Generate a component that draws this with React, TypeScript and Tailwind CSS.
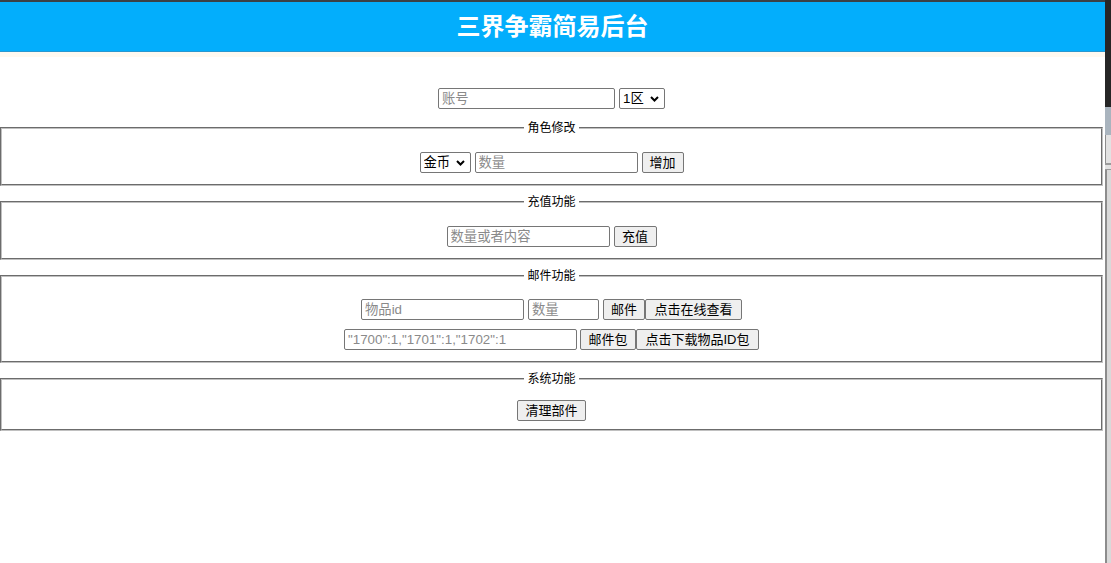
import React from "react";

function TextInput({ placeholder, w }: { placeholder: string; w: string }) {
  return (
    <input
      type="text"
      placeholder={placeholder}
      className={`${w} h-[21px] shrink-0 rounded-[2px] border border-[#767676] bg-white px-[3px] text-[13.33px] leading-[19px] text-black outline-none placeholder:text-[#8a8a8a]`}
    />
  );
}

function Select({ label, w }: { label: string; w: string }) {
  return (
    <span className={`relative inline-flex ${w} h-[21px] shrink-0`}>
      <select className="h-full w-full appearance-none rounded-[2px] border border-[#767676] bg-white pl-[3px] text-[13.33px] leading-[19px] text-black outline-none">
        <option>{label}</option>
      </select>
      <svg
        className="pointer-events-none absolute right-[6px] top-[8px]"
        width="9"
        height="6"
        viewBox="0 0 9 6"
      >
        <path d="M1 1l3.5 3.5L8 1" fill="none" stroke="#000" strokeWidth="2" />
      </svg>
    </span>
  );
}

function Btn({ label, w }: { label: string; w: string }) {
  return (
    <button
      type="button"
      className={`${w} h-[21px] shrink-0 rounded-[2px] border border-[#767676] bg-[#efefef] text-center text-[13px] leading-[19px] text-black`}
    >
      {label}
    </button>
  );
}

export default function App() {
  return (
    <div className="flex h-[563px] w-[1111px] overflow-hidden bg-white font-['Liberation_Sans','Noto_Sans_CJK_SC',sans-serif] text-black">
      <main className="flex w-[1105px] flex-col">
        <div className="h-[2px] bg-[#3b4046]" />
        <header className="flex h-[50px] items-center justify-center border-b border-[#2a98cf] bg-[#03aefc]">
          <h1 className="text-[24px] font-bold leading-none text-white">三界争霸简易后台</h1>
        </header>
        <div className="h-[5px] bg-[#fff9f0]" />

        <div className="mt-[31px] flex h-[21px] items-center justify-center gap-[4px] pr-[2px]">
          <TextInput placeholder="账号" w="w-[177px]" />
          <Select label="1区" w="w-[46px]" />
        </div>

        <fieldset className="mr-[2px] mt-[11px] border-2 border-[#c0c0c0] px-3 pb-[11px] pt-4 [border-style:groove]">
          <legend className="mx-auto px-[3px] text-[12px] leading-4">角色修改</legend>
          <div className="flex h-[21px] items-center justify-center gap-[4px]">
            <Select label="金币" w="w-[51px]" />
            <TextInput placeholder="数量" w="w-[163px]" />
            <Btn label="增加" w="w-[42px]" />
          </div>
        </fieldset>

        <fieldset className="mr-[2px] mt-[8px] border-2 border-[#c0c0c0] px-3 pb-[11px] pt-4 [border-style:groove]">
          <legend className="mx-auto px-[3px] text-[12px] leading-4">充值功能</legend>
          <div className="flex h-[21px] items-center justify-center gap-[4px]">
            <TextInput placeholder="数量或者内容" w="w-[163px]" />
            <Btn label="充值" w="w-[43px]" />
          </div>
        </fieldset>

        <fieldset className="mr-[2px] mt-[8px] border-2 border-[#c0c0c0] px-3 pb-[11px] pt-[15px] [border-style:groove]">
          <legend className="mx-auto px-[3px] text-[12px] leading-4">邮件功能</legend>
          <div className="flex h-[21px] items-center justify-center gap-[4px]">
            <TextInput placeholder="物品id" w="w-[163px]" />
            <TextInput placeholder="数量" w="w-[71px]" />
            <div className="flex">
              <Btn label="邮件" w="w-[42px]" />
              <Btn label="点击在线查看" w="w-[97px]" />
            </div>
          </div>
          <div className="mt-[9px] flex h-[21px] items-center justify-center gap-[3px]">
            <TextInput placeholder={'"1700":1,"1701":1,"1702":1'} w="w-[233px]" />
            <div className="flex">
              <Btn label="邮件包" w="w-[56px]" />
              <Btn label="点击下载物品ID包" w="w-[123px]" />
            </div>
          </div>
        </fieldset>

        <fieldset className="mr-[2px] mt-[8px] border-2 border-[#c0c0c0] px-3 pb-[8px] pt-[12px] [border-style:groove]">
          <legend className="mx-auto px-[3px] text-[12px] leading-4">系统功能</legend>
          <div className="flex h-[22px] items-center justify-center">
            <Btn label="清理部件" w="w-[69px]" />
          </div>
        </fieldset>
      </main>

      <aside className="flex w-[6px] flex-col">
        <div className="h-[107px] bg-[#262626]" />
        <div className="h-[28px] bg-[#a9b4be]" />
        <div className="h-[28px] border-l border-[#8c8c8c] bg-[#e2e2e2]" />
        <div className="h-[2px] bg-[#9a9a9a]" />
        <div className="h-[4px] bg-[#e2e2e2]" />
        <div className="h-[1px] bg-[#9a9a9a]" />
        <div className="flex-1 border-l-2 border-[#8c8c8c] bg-[#d9d9d9]" />
      </aside>
    </div>
  );
}
